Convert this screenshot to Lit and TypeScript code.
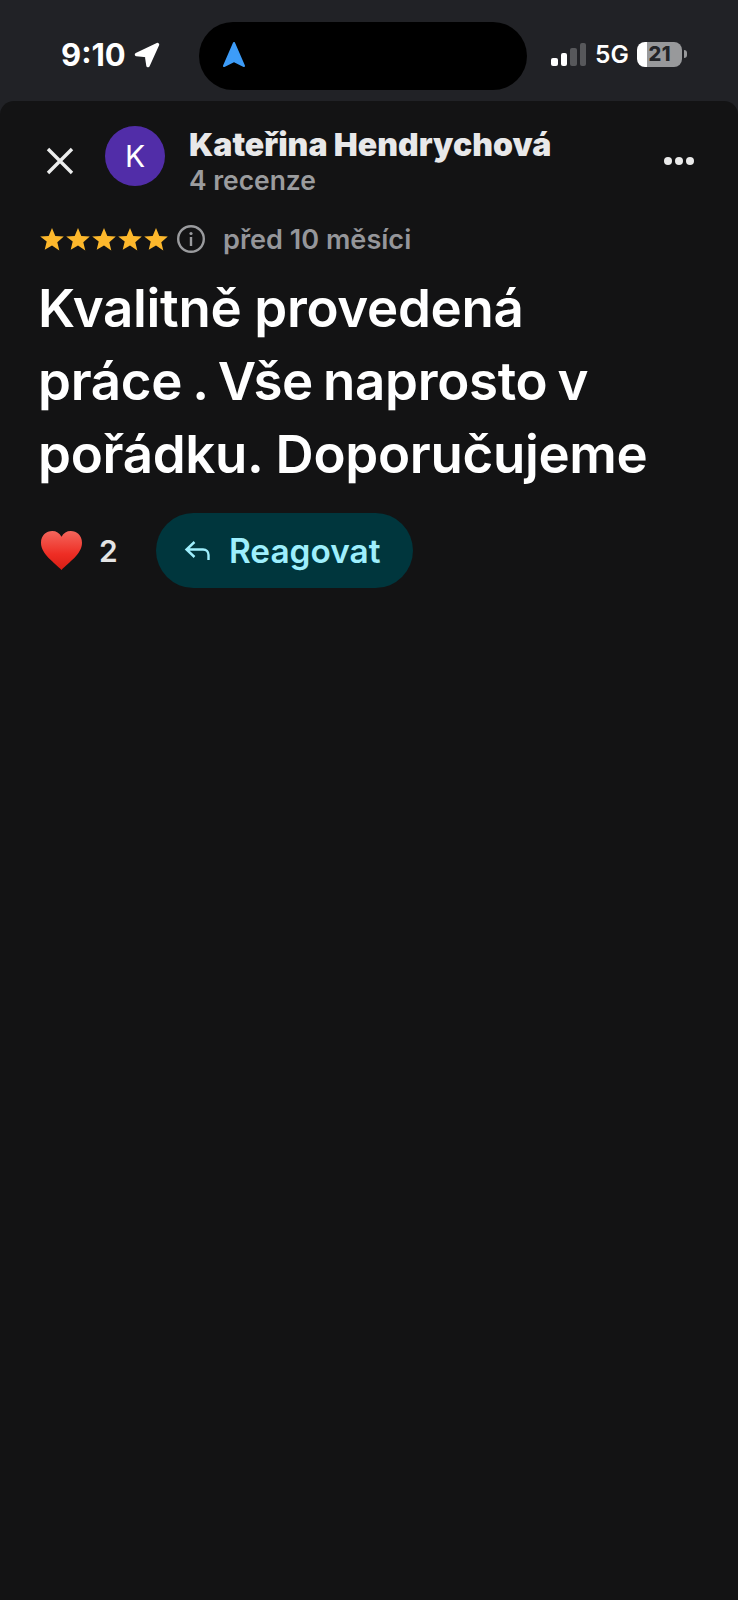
import { LitElement, html, css, svg } from "lit";
import { customElement } from "lit/decorators.js";

const star = (i: number) => svg`<path transform="translate(${i * 26} 0)" fill="#fdb82c" d="M13 1l3.300 7.900 8.500.7-6.500 5.600 2 8.300L13 18.400 5.700 22.800l2-8.300L1.200 9.600l8.500-.7z"/>`;

@customElement("app-root")
export class AppRoot extends LitElement {
  static styles = css`
    :host { display: block; width: 738px; height: 1600px; background: #212226; overflow: hidden; font-family: Inter, "Liberation Sans", sans-serif; }
    .status { height: 101px; box-sizing: border-box; padding: 22px 0 0 61px; display: flex; align-items: flex-start; color: #fff; }
    .left { display: flex; align-items: center; gap: 8px; width: 138px; height: 64px; font-size: 31px; font-weight: 700; }
    .left svg { display: block; margin-top: 2px; }
    .island { width: 328px; height: 68px; border-radius: 34px; background: #000; display: flex; align-items: center; padding: 0 0 2px 23px; box-sizing: border-box; }
    .right { display: flex; align-items: center; height: 64px; margin-left: 26px; }
    .bars { display: flex; align-items: flex-end; gap: 3px; height: 23px; margin-top: 1px; margin-left: -2px; }
    .bars i { display: block; width: 6.500px; border-radius: 2px; background: #fff; }
    .bars i.off { background: #57585b; }
    .b1 { height: 8px; } .b2 { height: 13px; } .b3 { height: 18px; } .b4 { height: 23px; }
    .net { font-size: 24.500px; font-weight: 600; margin-left: 9px; }
    .batt { width: 45px; height: 25px; border-radius: 8px; margin-left: 8px; background: linear-gradient(90deg, #fff 0 10px, #98999b 10px); color: #232427; font-size: 20px; font-weight: 800; display: flex; align-items: center; justify-content: center; padding-left: 1px; box-sizing: border-box; letter-spacing: .5px; }
    .nub { width: 3px; height: 8px; background: #98999b; border-radius: 0 3px 3px 0; margin-left: 2px; }
    .sheet { height: 1499px; background: #131314; border-radius: 14px 14px 0 0; box-sizing: border-box; padding: 25px 40px 0 39px; }
    .head { display: flex; align-items: center; height: 60px; }
    .close { width: 28px; height: 28px; margin: 10px 0 0 7px; display: block; }
    .avatar { width: 60px; height: 60px; border-radius: 50%; background: #512da8; color: #fff; font-size: 30px; font-weight: 400; display: flex; align-items: center; justify-content: center; margin-left: 31px; flex: none; }
    .who { margin-left: 24px; flex: 1; margin-top: 12px; }
    .name { font-size: 32px; font-weight: 900; color: #e8e8e9; line-height: 36px; }
    .count { font-size: 26.400px; font-weight: 600; color: #9b9c9e; line-height: 35px; }
    .dots { display: flex; gap: 3px; margin: 10px 4px 0 0; }
    .dots i { display: block; width: 8px; height: 8px; border-radius: 50%; background: #eaeaea; }
    .meta { display: flex; align-items: center; margin-top: 36px; height: 34px; }
    .stars { display: block; width: 130px; height: 24px; }
    .info { display: block; width: 30px; height: 30px; margin-left: 7px; }
    .ago { font-size: 27.100px; font-weight: 600; color: #95969a; margin-left: 17px; }
    h1 { margin: 16px 0 0 -1px; font-size: 52.800px; line-height: 73px; font-weight: 600; color: #fff; letter-spacing: -0.3px; }
    .tight { word-spacing: -3px; }
    .actions { display: flex; align-items: center; margin-top: 22px; }
    .heart { display: block; width: 43px; height: 41px; margin-left: 1px; }
    .n { font-size: 30px; font-weight: 600; color: #e4e4e5; margin-left: 16px; width: 57px; }
    .reply { width: 257px; height: 75px; border-radius: 38px; background: #00363d; color: #9eeffd; display: flex; align-items: center; box-sizing: border-box; padding-left: 28px; font-size: 33.400px; font-weight: 600; }
    .reply svg { display: block; width: 26px; height: 24px; margin-right: 19px; }
  `;

  render() {
    return html`
      <div class="status">
        <div class="left">
          <span>9:10</span>
          <svg width="26" height="26" viewBox="0 0 26 26"><path fill="#fff" stroke="#fff" stroke-width="3.500" stroke-linejoin="round" d="M23.500 2.500 2.500 12.500 12.500 13.500 14 23.500z"/></svg>
        </div>
        <div class="island">
          <svg width="24" height="28" viewBox="0 0 24 28"><path fill="#3d9cf8" stroke="#3d9cf8" stroke-width="2" stroke-linejoin="round" d="M12 2 22 25 12 20 2 25z"/></svg>
        </div>
        <div class="right">
          <div class="bars"><i class="b1"></i><i class="b2"></i><i class="b3 off"></i><i class="b4 off"></i></div>
          <span class="net">5G</span>
          <div class="batt">21</div>
          <div class="nub"></div>
        </div>
      </div>
      <div class="sheet">
        <div class="head">
          <svg class="close" viewBox="0 0 28 28"><path stroke="#eceded" stroke-width="3.400" fill="none" d="M2 2 26 26M26 2 2 26"/></svg>
          <div class="avatar">K</div>
          <div class="who">
            <div class="name">Kateřina Hendrychová</div>
            <div class="count">4 recenze</div>
          </div>
          <div class="dots"><i></i><i></i><i></i></div>
        </div>
        <div class="meta">
          <svg class="stars" viewBox="0 0 130 24">${[0, 1, 2, 3, 4].map(star)}</svg>
          <svg class="info" viewBox="0 0 30 30"><circle cx="15" cy="15" r="12.800" fill="none" stroke="#9a9b9e" stroke-width="2.400"/><rect x="13.800" y="13" width="2.400" height="9" fill="#9a9b9e"/><circle cx="15" cy="9.500" r="1.600" fill="#9a9b9e"/></svg>
          <span class="ago">před 10 měsíci</span>
        </div>
        <h1>Kvalitně provedená<br><span class="tight">práce . Vše naprosto v</span><br>pořádku. Doporučujeme</h1>
        <div class="actions">
          <svg class="heart" viewBox="0 0 44 42"><defs><linearGradient id="h" x1="0" y1="0" x2="0" y2="1"><stop offset="0" stop-color="#f4665c"/><stop offset=".6" stop-color="#ee2d24"/><stop offset="1" stop-color="#d81e14"/></linearGradient></defs><path fill="url(#h)" d="M22 41C15 33 1 25 1 13 1 5.500 6.500 1 12.500 1 16.500 1 20 3 22 7 24 3 27.500 1 31.500 1 37.500 1 43 5.500 43 13 43 25 29 33 22 41z"/></svg>
          <span class="n">2</span>
          <div class="reply">
            <svg viewBox="0 0 26 24"><path fill="none" stroke="#9eeffd" stroke-width="2.400" d="M10.500 3 2.500 10.500 10.500 18M2.500 10.500H19C22.500 10.500 24.500 13 24.500 16V21"/></svg>
            <span>Reagovat</span>
          </div>
        </div>
      </div>
    `;
  }
}
